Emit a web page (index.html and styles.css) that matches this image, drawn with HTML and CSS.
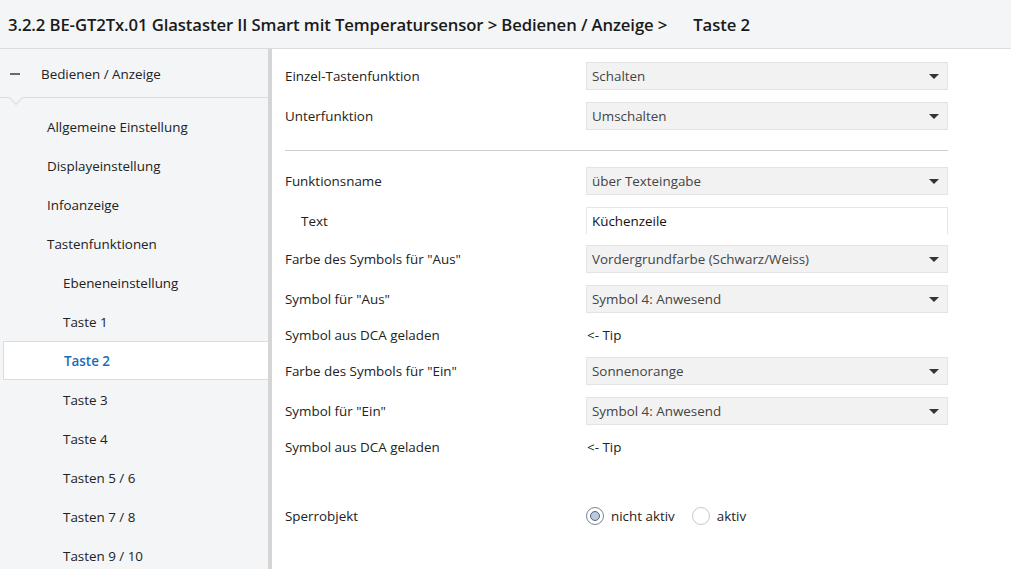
FILE: index.html
```html
<!DOCTYPE html>
<html lang="de">
<head>
<meta charset="utf-8">
<title>Taste 2</title>
<link rel="stylesheet" href="styles.css">
</head>
<body>
<div class="app">
  <header class="topbar">
    <span class="crumbs">3.2.2 BE-GT2Tx.01 Glastaster II Smart mit Temperatursensor &gt; Bedienen / Anzeige &gt;</span>
    <span class="current">Taste 2</span>
  </header>
  <div class="body">
    <nav class="sidebar">
      <div class="group-head">
        <span class="minus"></span>
        <span class="group-title">Bedienen / Anzeige</span>
        <span class="notch"></span>
      </div>
      <ul class="nav">
        <li class="l1">Allgemeine Einstellung</li>
        <li class="l1">Displayeinstellung</li>
        <li class="l1">Infoanzeige</li>
        <li class="l1">Tastenfunktionen</li>
        <li class="l2">Ebeneneinstellung</li>
        <li class="l2">Taste 1</li>
        <li class="l2 active">Taste 2</li>
        <li class="l2">Taste 3</li>
        <li class="l2">Taste 4</li>
        <li class="l2">Tasten 5 / 6</li>
        <li class="l2">Tasten 7 / 8</li>
        <li class="l2">Tasten 9 / 10</li>
      </ul>
    </nav>
    <main class="content">
      <div class="row">
        <div class="label">Einzel-Tastenfunktion</div>
        <div class="select">Schalten<span class="arrow"></span></div>
      </div>
      <div class="row">
        <div class="label">Unterfunktion</div>
        <div class="select">Umschalten<span class="arrow"></span></div>
      </div>
      <div class="sep"></div>
      <div class="row">
        <div class="label">Funktionsname</div>
        <div class="select">über Texteingabe<span class="arrow"></span></div>
      </div>
      <div class="row inputrow">
        <div class="label indent">Text</div>
        <div class="input">Küchenzeile</div>
      </div>
      <div class="row">
        <div class="label">Farbe des Symbols für "Aus"</div>
        <div class="select">Vordergrundfarbe (Schwarz/Weiss)<span class="arrow"></span></div>
      </div>
      <div class="row">
        <div class="label">Symbol für "Aus"</div>
        <div class="select">Symbol 4: Anwesend<span class="arrow"></span></div>
      </div>
      <div class="row textrow">
        <div class="label">Symbol aus DCA geladen</div>
        <div class="value">&lt;- Tip</div>
      </div>
      <div class="row">
        <div class="label">Farbe des Symbols für "Ein"</div>
        <div class="select">Sonnenorange<span class="arrow"></span></div>
      </div>
      <div class="row">
        <div class="label">Symbol für "Ein"</div>
        <div class="select">Symbol 4: Anwesend<span class="arrow"></span></div>
      </div>
      <div class="row textrow">
        <div class="label">Symbol aus DCA geladen</div>
        <div class="value">&lt;- Tip</div>
      </div>
      <div class="row radiorow">
        <div class="label">Sperrobjekt</div>
        <div class="radios">
          <span class="radio checked"></span><span class="rlabel">nicht aktiv</span>
          <span class="radio"></span><span class="rlabel">aktiv</span>
        </div>
      </div>
    </main>
  </div>
</div>
</body>
</html>
```

FILE: styles.css
```css
* { box-sizing: border-box; }
html, body { margin: 0; padding: 0; }
body {
  width: 1011px;
  height: 569px;
  overflow: hidden;
  background: #ffffff;
  font-family: "Open Sans", "Noto Sans", "Liberation Sans", sans-serif;
  font-size: 13px;
  color: #222;
}
.app { display: flex; flex-direction: column; height: 569px; }
.topbar {
  height: 49px;
  flex: none;
  background: #f4f5f7;
  border-bottom: 1px solid #dcdcdc;
  display: flex;
  align-items: center;
  padding: 0 0 0 8px;
  font-size: 16.7px;
  font-weight: 600;
  color: #1a1a1a;
  letter-spacing: -0.1px;
}
.current { margin-left: 26px; }
.body { flex: 1; display: flex; min-height: 0; }
.sidebar {
  width: 272px;
  flex: none;
  background: #f4f5f7;
  border-right: 4px solid #d5d5d5;
  overflow: hidden;
}
.group-head {
  position: relative;
  height: 49px;
  border-bottom: 1px solid #dcdcdc;
  display: flex;
  align-items: center;
  padding-left: 10px;
  padding-top: 1px;
}
.minus {
  width: 10px;
  height: 2px;
  background: #6a6a6a;
  margin-right: 21px;
}
.group-title { font-size: 13.4px; color: #222; }
.notch {
  position: absolute;
  left: 11px;
  bottom: -6px;
  width: 10px;
  height: 10px;
  background: #f4f5f7;
  border-right: 1px solid #dcdcdc;
  border-bottom: 1px solid #dcdcdc;
  transform: rotate(45deg);
}
.nav { list-style: none; margin: 0; padding: 9px 0 0 0; }
.nav li {
  height: 39px;
  display: flex;
  align-items: center;
  font-size: 13.4px;
  color: #222;
}
.nav .l1 { padding-left: 47px; }
.nav .l2 { padding-left: 63px; }
.nav .active {
  margin-left: 3px;
  padding-left: 60px;
  background: #ffffff;
  border: 1px solid #dcdcdc;
  border-right: none;
  color: #1b6db3;
  font-weight: 600;
}
.content {
  flex: 1;
  padding: 13px 63px 0 13px;
}
.row {
  display: flex;
  align-items: center;
  min-height: 28px;
  margin-bottom: 12px;
}
.label {
  width: 301px;
  flex: none;
  font-size: 13.4px;
  color: #222;
}
.label.indent { padding-left: 16px; }
.select {
  flex: 1;
  height: 28px;
  background: #f2f2f2;
  border: 1px solid #e4e4e4;
  display: flex;
  align-items: center;
  padding-left: 5px;
  font-size: 13.4px;
  color: #444;
  position: relative;
}
.arrow {
  margin-left: auto;
  margin-right: 8px;
  width: 0;
  height: 0;
  border-left: 5px solid transparent;
  border-right: 5px solid transparent;
  border-top: 5px solid #333;
}
.inputrow { min-height: 27px; margin-bottom: 11px; }
.input {
  flex: 1;
  height: 27px;
  background: #fff;
  border: 1px solid #e6e6e6;
  border-bottom: none;
  display: flex;
  align-items: center;
  padding-left: 5px;
  font-size: 13.4px;
  color: #111;
}
.sep {
  height: 1px;
  background: #cfcfcf;
  margin: 20px 0 16px 0;
}
.textrow { min-height: 20px; }
.value { font-size: 13.4px; color: #222; padding-left: 1px; }
.radiorow { margin-top: 49px; min-height: 20px; }
.radios { display: flex; align-items: center; }
.radio {
  width: 18px;
  height: 18px;
  border-radius: 50%;
  border: 1px solid #c8c8c8;
  background: #fff;
  margin-right: 7px;
  position: relative;
}
.radio.checked {
  border: 1px solid #7b8591;
}
.radio.checked::after {
  content: "";
  position: absolute;
  left: 3px; top: 3px;
  width: 10px; height: 10px;
  border-radius: 50%;
  background: #b9c9de;
  border: 1px solid #51657f;
  box-sizing: border-box;
}
.rlabel { font-size: 13.4px; color: #222; margin-right: 17px; }
```
